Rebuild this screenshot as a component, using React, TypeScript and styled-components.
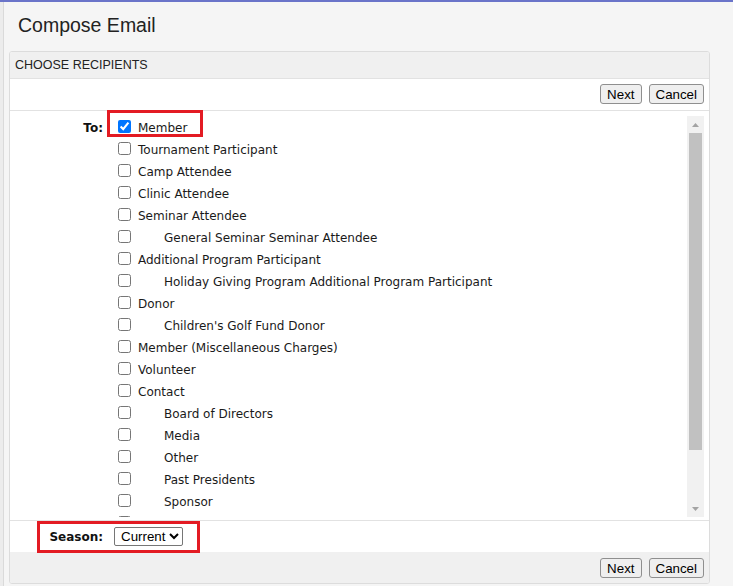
import React from "react";
import styled, { createGlobalStyle } from "styled-components";

const GlobalStyle = createGlobalStyle`
  html, body { margin: 0; padding: 0; background: #f5f5f5; }
  * { box-sizing: border-box; }
`;

const Frame = styled.div`
  display: flex;
  min-height: 586px;
  border-top: 2px solid #6a74c9;
  background: #f5f5f5;
  font-family: "Liberation Sans", Arial, sans-serif;
  color: #222;
`;

const Edge = styled.div`
  width: 4px;
  flex: none;
  background: #ececec;
  border-right: 1px solid #dadada;
`;

const Main = styled.main`
  flex: 1;
  padding: 0 23px 0 5px;
`;

const Title = styled.h1`
  margin: 0;
  height: 49px;
  padding: 11px 0 0 9px;
  font-size: 19.5px;
  line-height: 24px;
  font-weight: normal;
  color: #222;
`;

const Panel = styled.section`
  background: #fff;
  border: 1px solid #dcdcdc;
  border-radius: 3px;
  overflow: hidden;
`;

const PanelHeader = styled.div`
  height: 27px;
  line-height: 26px;
  padding-left: 5px;
  background: #f0f0f0;
  border-bottom: 1px solid #e2e2e2;
  font-size: 12.5px;
  text-transform: uppercase;
  color: #222;
`;

const ButtonBar = styled.div<{ $footer?: boolean }>`
  display: flex;
  justify-content: flex-end;
  gap: 7px;
  padding: ${(p) => (p.$footer ? "6px 5px 5px" : "5px 5px 6px")};
  background: ${(p) => (p.$footer ? "#f0f0f0" : "#fff")};
  border-bottom: ${(p) => (p.$footer ? "none" : "1px solid #e2e2e2")};
`;

const Button = styled.button`
  height: 20px;
  padding: 0 6px;
  font-family: "Liberation Sans", Arial, sans-serif;
  font-size: 13.333px;
  color: #000;
  background: #efefef;
  border: 1px solid #8f8f8f;
  border-radius: 3px;
`;

const RecipientSection = styled.div`
  position: relative;
  display: grid;
  grid-template-columns: 93px 1fr;
  column-gap: 6px;
  padding: 6px 5px 3px 0;
  border-bottom: 1px solid #e2e2e2;
`;

const FieldLabel = styled.div`
  font-family: "DejaVu Sans", Verdana, sans-serif;
  font-size: 12px;
  font-weight: bold;
  line-height: 22px;
  text-align: right;
  color: #111;
`;

const ScrollArea = styled.div`
  display: flex;
  height: 400px;
`;

const ListViewport = styled.div`
  flex: 1;
  overflow: hidden;
`;

const Scrollbar = styled.div`
  width: 17px;
  flex: none;
  display: flex;
  flex-direction: column;
  background: #f1f1f1;
  margin-top: -1px;
`;

const ArrowButton = styled.div`
  height: 17px;
  flex: none;
  display: flex;
  align-items: center;
  justify-content: center;
`;

const Track = styled.div`
  flex: 1;
  padding: 0 2px;
`;

const Thumb = styled.div`
  height: 317px;
  background: #c1c1c1;
`;

const Row = styled.label`
  display: flex;
  align-items: flex-start;
  height: 22px;
  padding-left: 5px;
  font-family: "DejaVu Sans", Verdana, sans-serif;
  font-size: 12px;
  line-height: 22px;
  color: #1a1a1a;
  white-space: nowrap;
`;

const Check = styled.input`
  width: 13px;
  height: 13px;
  margin: 3px 3px 0 4px;
  flex: none;
`;

const RowText = styled.span<{ $indent?: boolean }>`
  padding-left: ${(p) => (p.$indent ? "30px" : "4px")};
`;

const SeasonRow = styled.div`
  position: relative;
  display: grid;
  grid-template-columns: 93px 1fr;
  column-gap: 6px;
  align-items: center;
  height: 31px;
`;

const Select = styled.select`
  justify-self: start;
  width: 69px;
  margin-left: 5px;
  height: 19px;
  padding: 0 0 0 2px;
  font-family: "Liberation Sans", Arial, sans-serif;
  font-size: 13.333px;
  color: #000;
  background: #fff;
  border: 1px solid #767676;
  border-radius: 2px;
`;

const Highlight = styled.div<{ $left: number; $top: number; $w: number; $h: number }>`
  position: absolute;
  left: ${(p) => p.$left}px;
  top: ${(p) => p.$top}px;
  width: ${(p) => p.$w}px;
  height: ${(p) => p.$h}px;
  border: 3px solid #e31b23;
  pointer-events: none;
`;

const recipients: { label: string; indent?: boolean; checked?: boolean }[] = [
  { label: "Member", checked: true },
  { label: "Tournament Participant" },
  { label: "Camp Attendee" },
  { label: "Clinic Attendee" },
  { label: "Seminar Attendee" },
  { label: "General Seminar Seminar Attendee", indent: true },
  { label: "Additional Program Participant" },
  { label: "Holiday Giving Program Additional Program Participant", indent: true },
  { label: "Donor" },
  { label: "Children's Golf Fund Donor", indent: true },
  { label: "Member (Miscellaneous Charges)" },
  { label: "Volunteer" },
  { label: "Contact" },
  { label: "Board of Directors", indent: true },
  { label: "Media", indent: true },
  { label: "Other", indent: true },
  { label: "Past Presidents", indent: true },
  { label: "Sponsor", indent: true },
  { label: "Staff", indent: true },
];

const Triangle = ({ down }: { down?: boolean }) => (
  <svg width="7" height="4" viewBox="0 0 7 4">
    <path d={down ? "M0 0 L7 0 L3.5 4 Z" : "M0 4 L3.5 0 L7 4 Z"} fill="#a3a3a3" />
  </svg>
);

export default function App() {
  return (
    <>
      <GlobalStyle />
      <Frame>
        <Edge />
        <Main>
          <Title>Compose Email</Title>
          <Panel>
            <PanelHeader>Choose Recipients</PanelHeader>
            <ButtonBar>
              <Button>Next</Button>
              <Button>Cancel</Button>
            </ButtonBar>
            <RecipientSection>
              <FieldLabel>To:</FieldLabel>
              <ScrollArea>
                <ListViewport>
                  {recipients.map((r) => (
                    <Row key={r.label}>
                      <Check type="checkbox" defaultChecked={r.checked} />
                      <RowText $indent={r.indent}>{r.label}</RowText>
                    </Row>
                  ))}
                </ListViewport>
                <Scrollbar>
                  <ArrowButton>
                    <Triangle />
                  </ArrowButton>
                  <Track>
                    <Thumb />
                  </Track>
                  <ArrowButton>
                    <Triangle down />
                  </ArrowButton>
                </Scrollbar>
              </ScrollArea>
              <Highlight $left={97} $top={-1} $w={96} $h={27} />
            </RecipientSection>
            <SeasonRow>
              <FieldLabel>Season:</FieldLabel>
              <Select defaultValue="Current">
                <option>Current</option>
                <option>Previous</option>
              </Select>
              <Highlight $left={27} $top={0} $w={163} $h={32} />
            </SeasonRow>
            <ButtonBar $footer>
              <Button>Next</Button>
              <Button>Cancel</Button>
            </ButtonBar>
          </Panel>
        </Main>
      </Frame>
    </>
  );
}
